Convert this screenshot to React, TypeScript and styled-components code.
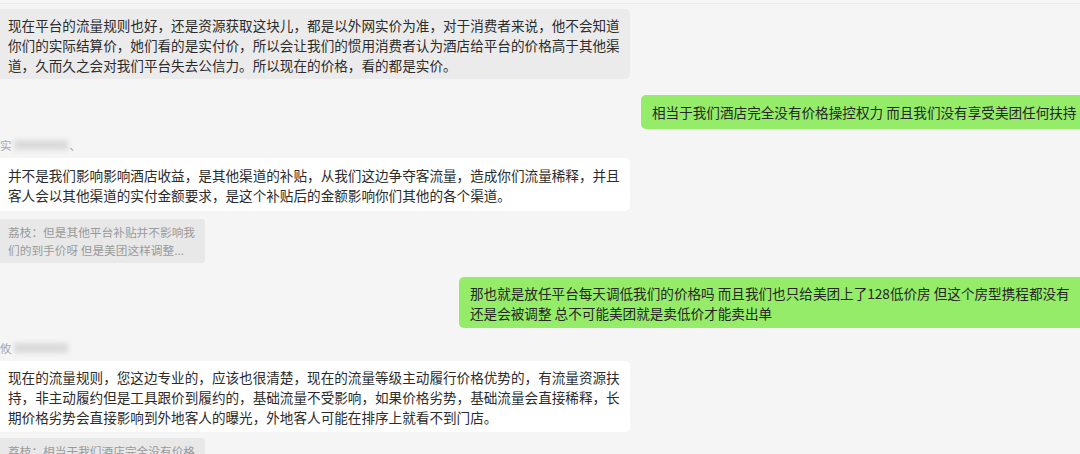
import styled, { createGlobalStyle } from "styled-components";

const GlobalStyle = createGlobalStyle`
  html, body {
    margin: 0;
    padding: 0;
    background: #f5f5f5;
  }
  body {
    font-family: "Noto Sans CJK SC", "Noto Sans", sans-serif;
    overflow: hidden;
  }
`;

type Msg =
  | { kind: "left"; top: number; lines: string[]; gray?: boolean; pad: string }
  | { kind: "right"; top: number; lines: string[]; pad: string; left: number }
  | { kind: "name"; top: number; first: string; tail?: string }
  | { kind: "quote"; top: number; lines: string[] };

const messages: Msg[] = [
  {
    kind: "left",
    top: 5,
    gray: true,
    pad: "6px 10px 4px 8px",
    lines: [
      "现在平台的流量规则也好，还是资源获取这块儿，都是以外网实价为准，对于消费者来说，他不会知道",
      "你们的实际结算价，她们看的是实付价，所以会让我们的惯用消费者认为酒店给平台的价格高于其他渠",
      "道，久而久之会对我们平台失去公信力。所以现在的价格，看的都是实价。",
    ],
  },
  {
    kind: "right",
    top: 16,
    left: 641,
    pad: "7px 11px 7px 11px",
    lines: ["相当于我们酒店完全没有价格操控权力 而且我们没有享受美团任何扶持"],
  },
  { kind: "name", top: 9, first: "实", tail: "、" },
  {
    kind: "left",
    top: 6,
    pad: "7px 10px 6px 8px",
    lines: [
      "并不是我们影响影响酒店收益，是其他渠道的补贴，从我们这边争夺客流量，造成你们流量稀释，并且",
      "客人会以其他渠道的实付金额要求，是这个补贴后的金额影响你们其他的各个渠道。",
    ],
  },
  {
    kind: "quote",
    top: 8,
    lines: ["荔枝：但是其他平台补贴并不影响我", "们的到手价呀  但是美团这样调整..."],
  },
  {
    kind: "right",
    top: 14,
    left: 459,
    pad: "6px 11px 5px 11px",
    lines: [
      "那也就是放任平台每天调低我们的价格吗  而且我们也只给美团上了128低价房 但这个房型携程都没有",
      "还是会被调整 总不可能美团就是卖低价才能卖出单",
    ],
  },
  { kind: "name", top: 13, first: "攸" },
  {
    kind: "left",
    top: 6,
    pad: "6px 10px 5px 8px",
    lines: [
      "现在的流量规则，您这边专业的，应该也很清楚，现在的流量等级主动履行价格优势的，有流量资源扶",
      "持，非主动履约但是工具跟价到履约的，基础流量不受影响，如果价格劣势，基础流量会直接稀释，长",
      "期价格劣势会直接影响到外地客人的曝光，外地客人可能在排序上就看不到门店。",
    ],
  },
  {
    kind: "quote",
    top: 6,
    lines: ["荔枝：相当于我们酒店完全没有价格...", ""],
  },
];

const App = () => {
  return (
    <>
      <GlobalStyle />
      <Screen>
        <TopEdge />
        <Feed>
          {messages.map((m, i) => {
            if (m.kind === "left") {
              return (
                <LeftBubble key={i} $top={m.top} $gray={m.gray} $pad={m.pad}>
                  {m.lines.map((l, j) => (
                    <Line key={j}>{l}</Line>
                  ))}
                </LeftBubble>
              );
            }
            if (m.kind === "right") {
              return (
                <RightBubble key={i} $top={m.top} $left={m.left} $pad={m.pad}>
                  {m.lines.map((l, j) => (
                    <Line key={j}>{l}</Line>
                  ))}
                </RightBubble>
              );
            }
            if (m.kind === "name") {
              return (
                <NameLabel key={i} $top={m.top}>
                  {m.first}
                  <Blurred />
                  {m.tail}
                </NameLabel>
              );
            }
            return (
              <Quote key={i} $top={m.top}>
                {m.lines.map((l, j) => (
                  <QuoteLine key={j}>{l || "\u00a0"}</QuoteLine>
                ))}
              </Quote>
            );
          })}
        </Feed>
      </Screen>
    </>
  );
};

export default App;

const Screen = styled.div`
  width: 1080px;
  height: 454px;
  overflow: hidden;
  background: #f5f5f5;
`;

const TopEdge = styled.div`
  height: 3px;
  border-bottom: 1px solid #ebebeb;
  background: #f7f7f7;
`;

const Feed = styled.div`
  display: flex;
  flex-direction: column;
  align-items: flex-start;
`;

const LeftBubble = styled.div<{ $top: number; $gray?: boolean; $pad: string }>`
  box-sizing: border-box;
  width: 630px;
  margin-top: ${(p) => p.$top}px;
  padding: ${(p) => p.$pad};
  background: ${(p) => (p.$gray ? "#ebebeb" : "#ffffff")};
  border-radius: 0 5px 5px 0;
  color: #2b2b2b;
  font-size: 13.6px;
  line-height: 20px;
`;

const RightBubble = styled.div<{ $top: number; $left: number; $pad: string }>`
  box-sizing: border-box;
  margin-top: ${(p) => p.$top}px;
  margin-left: ${(p) => p.$left}px;
  width: ${(p) => 1096 - p.$left}px;
  padding: ${(p) => p.$pad};
  background: #95ec69;
  border-radius: 5px 0 0 5px;
  color: #262626;
  font-size: 13.6px;
  line-height: 20px;
`;

const Line = styled.div`
  white-space: nowrap;
`;

const NameLabel = styled.div<{ $top: number }>`
  display: flex;
  align-items: center;
  margin-top: ${(p) => p.$top}px;
  height: 14px;
  font-size: 11.5px;
  line-height: 14px;
  color: #a6a6a6;
`;

const Blurred = styled.span`
  display: inline-block;
  width: 54px;
  height: 10px;
  margin: 0 2px;
  background: #dadada;
  filter: blur(2.5px);
`;

const Quote = styled.div<{ $top: number }>`
  box-sizing: border-box;
  width: 205px;
  margin-top: ${(p) => p.$top}px;
  padding: 4px 8px;
  background: #e8e8e8;
  border-radius: 0 3px 3px 0;
  color: #9a9a9a;
  font-size: 11.7px;
  line-height: 18px;
`;

const QuoteLine = styled.div`
  white-space: nowrap;
  overflow: hidden;
`;
